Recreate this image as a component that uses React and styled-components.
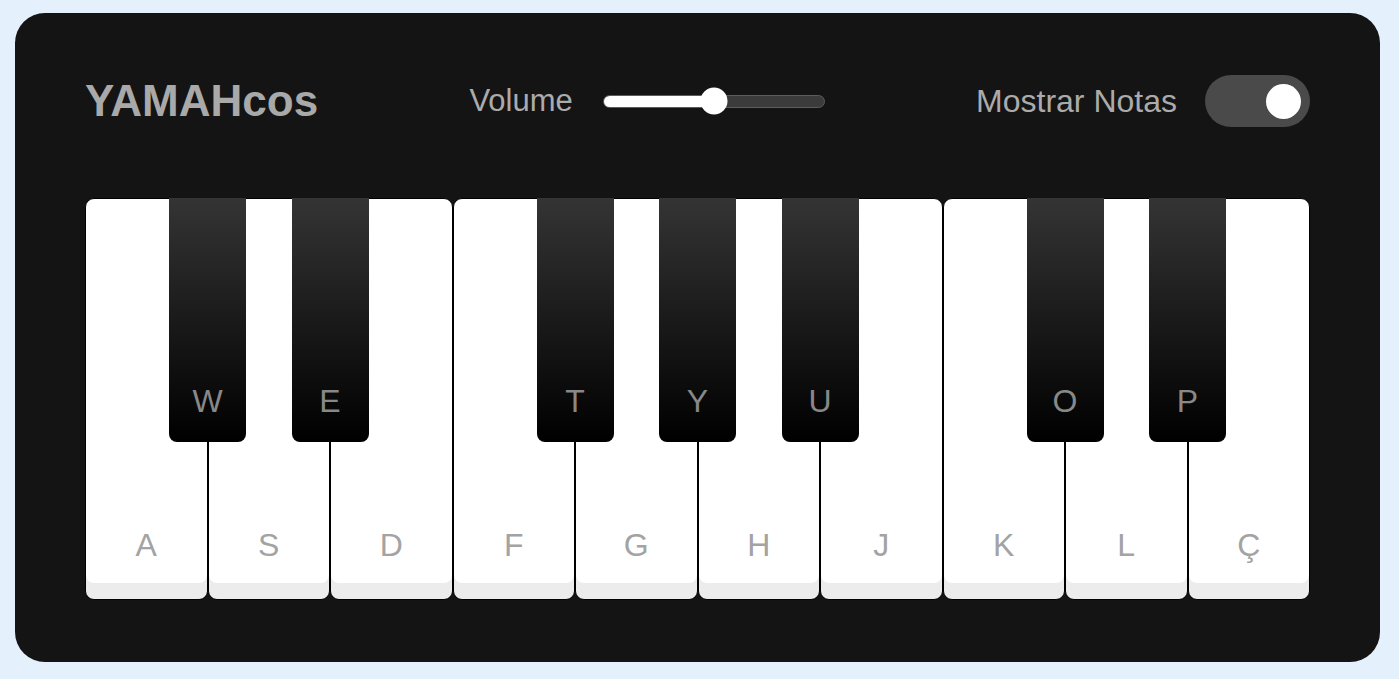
import React, { useState } from "react";
import styled, { createGlobalStyle } from "styled-components";

const GlobalStyle = createGlobalStyle`
  * { box-sizing: border-box; }
  body {
    margin: 0;
    background: #e4f1fd;
    font-family: "Liberation Sans", Arial, sans-serif;
  }
`;

const WHITE_KEYS = ["A", "S", "D", "F", "G", "H", "J", "K", "L", "Ç"];
// black key sits on the seam after white key number `at`
const BLACK_KEYS = [
  { label: "W", at: 1 },
  { label: "E", at: 2 },
  { label: "T", at: 4 },
  { label: "Y", at: 5 },
  { label: "U", at: 6 },
  { label: "O", at: 8 },
  { label: "P", at: 9 },
];

function App() {
  const [volume] = useState(50);
  const [showNotes, setShowNotes] = useState(true);

  return (
    <Page>
      <GlobalStyle />
      <Card>
        <Header>
          <Title>YAMAHcos</Title>
          <Control>
            <Label $size={31}>Volume</Label>
            <Track>
              <Fill style={{ width: `${volume}%` }} />
              <Thumb style={{ left: `${volume}%` }} />
            </Track>
          </Control>
          <Control $gap={28}>
            <Label>Mostrar Notas</Label>
            <Switch $on={showNotes} onClick={() => setShowNotes(!showNotes)}>
              <Knob />
            </Switch>
          </Control>
        </Header>

        <Keyboard>
          {WHITE_KEYS.map((k) => (
            <WhiteKey key={k}>{showNotes && <KeyLabel>{k}</KeyLabel>}</WhiteKey>
          ))}
          {BLACK_KEYS.map((b) => (
            <BlackKey key={b.label} style={{ left: `calc(${b.at * 10}% - 38.5px)` }}>
              {showNotes && <BlackLabel>{b.label}</BlackLabel>}
            </BlackKey>
          ))}
        </Keyboard>
      </Card>
    </Page>
  );
}

const Page = styled.div`
  padding: 13px 19px 17px 15px;
`;

const Card = styled.section`
  background: #141414;
  border-radius: 30px;
  padding: 62px 70px;
  height: 649px;
`;

const Header = styled.header`
  display: flex;
  align-items: center;
  justify-content: space-between;
  height: 52px;
  margin-bottom: 71px;
`;

const Title = styled.h1`
  margin: 0;
  font-size: 44px;
  font-weight: 700;
  color: #a9a9a9;
`;

const Control = styled.div`
  display: flex;
  align-items: center;
  gap: ${(p) => p.$gap || 30}px;
`;

const Label = styled.span`
  font-size: ${(p) => p.$size || 32}px;
  color: #ababab;
`;

const Track = styled.div`
  position: relative;
  width: 222px;
  height: 13px;
  border-radius: 7px;
  background: #3b3b3b;
  border: 1px solid #5c5c5c;
`;

const Fill = styled.div`
  height: 100%;
  border-radius: 7px 0 0 7px;
  background: #fff;
`;

const Thumb = styled.div`
  position: absolute;
  top: 50%;
  width: 27px;
  height: 27px;
  border-radius: 50%;
  background: #fff;
  transform: translate(-50%, -50%);
`;

const Switch = styled.div`
  display: flex;
  align-items: center;
  justify-content: ${(p) => (p.$on ? "flex-end" : "flex-start")};
  width: 105px;
  height: 52px;
  padding: 0 9px;
  border-radius: 26px;
  background: #4a4a4a;
  cursor: pointer;
`;

const Knob = styled.div`
  width: 35px;
  height: 35px;
  border-radius: 50%;
  background: #fff;
`;

const Keyboard = styled.div`
  position: relative;
  display: flex;
  height: 402px;
`;

const WhiteKey = styled.div`
  flex: 1;
  display: flex;
  align-items: flex-end;
  justify-content: center;
  padding-bottom: 35px;
  background: #fff;
  border: 1px solid #000;
  border-radius: 9px;
  box-shadow: inset 0 -16px 0 #ececec;
`;

const KeyLabel = styled.span`
  font-size: 32px;
  color: #a3a3a3;
`;

const BlackKey = styled.div`
  position: absolute;
  top: 0;
  width: 77px;
  height: 244px;
  display: flex;
  align-items: flex-end;
  justify-content: center;
  padding-bottom: 22px;
  background: linear-gradient(#343434, #000);
  border-radius: 0 0 8px 8px;
  z-index: 2;
`;

const BlackLabel = styled.span`
  font-size: 32px;
  color: #888;
`;

export default App;
